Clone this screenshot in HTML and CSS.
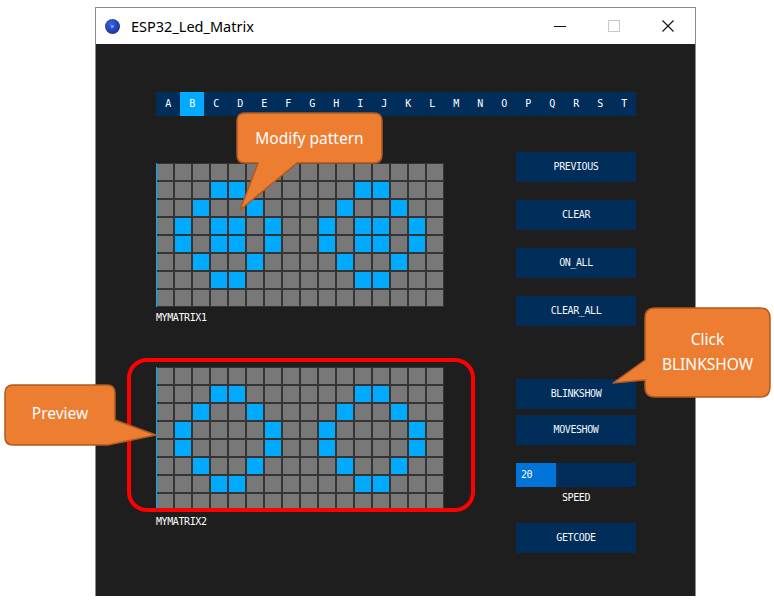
FILE: index.html
```html
<!DOCTYPE html>
<html>
<head>
<meta charset="utf-8">
<title>ESP32_Led_Matrix</title>
<link rel="stylesheet" href="styles.css">
</head>
<body>
<div class="window">
  <div class="titlebar">
    <svg class="app-icon" width="15" height="15" viewBox="0 0 15 15">
      <defs><radialGradient id="g" cx="40%" cy="35%" r="70%"><stop offset="0" stop-color="#3a63e0"/><stop offset="1" stop-color="#1a2f9c"/></radialGradient></defs>
      <circle cx="7.5" cy="7.5" r="7.5" fill="url(#g)"/>
      <path d="M6.3 5.6 L9.2 7.5 L6.3 9.4 Z" fill="#7fb6ff"/>
    </svg>
    <span class="title">ESP32_Led_Matrix</span>
    <div class="controls">
      <span class="ctl"><svg width="12" height="12" viewBox="0 0 12 12"><path d="M0 6.5 H12" stroke="#111" stroke-width="1"/></svg></span>
      <span class="ctl"><svg width="12" height="12" viewBox="0 0 12 12"><rect x="0.5" y="0.5" width="11" height="11" fill="none" stroke="#c8c8c8" stroke-width="1"/></svg></span>
      <span class="ctl"><svg width="12" height="12" viewBox="0 0 12 12"><path d="M0.5 0.5 L11.5 11.5 M11.5 0.5 L0.5 11.5" stroke="#111" stroke-width="1.1"/></svg></span>
    </div>
  </div>
  <div class="content">
    <div class="letters">
      <span>A</span><span class="active">B</span><span>C</span><span>D</span><span>E</span><span>F</span><span>G</span><span>H</span><span>I</span><span>J</span><span>K</span><span>L</span><span>M</span><span>N</span><span>O</span><span>P</span><span>Q</span><span>R</span><span>S</span><span>T</span>
    </div>
    <div class="main">
      <div class="left">
        <div class="matrix">
<i class="cell"></i><i class="cell"></i><i class="cell"></i><i class="cell"></i><i class="cell"></i><i class="cell"></i><i class="cell"></i><i class="cell"></i><i class="cell"></i><i class="cell"></i><i class="cell"></i><i class="cell"></i><i class="cell"></i><i class="cell"></i><i class="cell"></i><i class="cell"></i>
<i class="cell"></i><i class="cell"></i><i class="cell"></i><i class="cell on"></i><i class="cell on"></i><i class="cell"></i><i class="cell"></i><i class="cell"></i><i class="cell"></i><i class="cell"></i><i class="cell"></i><i class="cell on"></i><i class="cell on"></i><i class="cell"></i><i class="cell"></i><i class="cell"></i>
<i class="cell"></i><i class="cell"></i><i class="cell on"></i><i class="cell"></i><i class="cell"></i><i class="cell on"></i><i class="cell"></i><i class="cell"></i><i class="cell"></i><i class="cell"></i><i class="cell on"></i><i class="cell"></i><i class="cell"></i><i class="cell on"></i><i class="cell"></i><i class="cell"></i>
<i class="cell"></i><i class="cell on"></i><i class="cell"></i><i class="cell on"></i><i class="cell on"></i><i class="cell"></i><i class="cell on"></i><i class="cell"></i><i class="cell"></i><i class="cell on"></i><i class="cell"></i><i class="cell on"></i><i class="cell on"></i><i class="cell"></i><i class="cell on"></i><i class="cell"></i>
<i class="cell"></i><i class="cell on"></i><i class="cell"></i><i class="cell on"></i><i class="cell on"></i><i class="cell"></i><i class="cell on"></i><i class="cell"></i><i class="cell"></i><i class="cell on"></i><i class="cell"></i><i class="cell on"></i><i class="cell on"></i><i class="cell"></i><i class="cell on"></i><i class="cell"></i>
<i class="cell"></i><i class="cell"></i><i class="cell on"></i><i class="cell"></i><i class="cell"></i><i class="cell on"></i><i class="cell"></i><i class="cell"></i><i class="cell"></i><i class="cell"></i><i class="cell on"></i><i class="cell"></i><i class="cell"></i><i class="cell on"></i><i class="cell"></i><i class="cell"></i>
<i class="cell"></i><i class="cell"></i><i class="cell"></i><i class="cell on"></i><i class="cell on"></i><i class="cell"></i><i class="cell"></i><i class="cell"></i><i class="cell"></i><i class="cell"></i><i class="cell"></i><i class="cell on"></i><i class="cell on"></i><i class="cell"></i><i class="cell"></i><i class="cell"></i>
<i class="cell"></i><i class="cell"></i><i class="cell"></i><i class="cell"></i><i class="cell"></i><i class="cell"></i><i class="cell"></i><i class="cell"></i><i class="cell"></i><i class="cell"></i><i class="cell"></i><i class="cell"></i><i class="cell"></i><i class="cell"></i><i class="cell"></i><i class="cell"></i>
        </div>
        <div class="label">MYMATRIX1</div>
        <div class="matrix second">
<i class="cell"></i><i class="cell"></i><i class="cell"></i><i class="cell"></i><i class="cell"></i><i class="cell"></i><i class="cell"></i><i class="cell"></i><i class="cell"></i><i class="cell"></i><i class="cell"></i><i class="cell"></i><i class="cell"></i><i class="cell"></i><i class="cell"></i><i class="cell"></i>
<i class="cell"></i><i class="cell"></i><i class="cell"></i><i class="cell on"></i><i class="cell on"></i><i class="cell"></i><i class="cell"></i><i class="cell"></i><i class="cell"></i><i class="cell"></i><i class="cell"></i><i class="cell on"></i><i class="cell on"></i><i class="cell"></i><i class="cell"></i><i class="cell"></i>
<i class="cell"></i><i class="cell"></i><i class="cell on"></i><i class="cell"></i><i class="cell"></i><i class="cell on"></i><i class="cell"></i><i class="cell"></i><i class="cell"></i><i class="cell"></i><i class="cell on"></i><i class="cell"></i><i class="cell"></i><i class="cell on"></i><i class="cell"></i><i class="cell"></i>
<i class="cell"></i><i class="cell on"></i><i class="cell"></i><i class="cell"></i><i class="cell"></i><i class="cell"></i><i class="cell on"></i><i class="cell"></i><i class="cell"></i><i class="cell on"></i><i class="cell"></i><i class="cell"></i><i class="cell"></i><i class="cell"></i><i class="cell on"></i><i class="cell"></i>
<i class="cell"></i><i class="cell on"></i><i class="cell"></i><i class="cell"></i><i class="cell"></i><i class="cell"></i><i class="cell on"></i><i class="cell"></i><i class="cell"></i><i class="cell on"></i><i class="cell"></i><i class="cell"></i><i class="cell"></i><i class="cell"></i><i class="cell on"></i><i class="cell"></i>
<i class="cell"></i><i class="cell"></i><i class="cell on"></i><i class="cell"></i><i class="cell"></i><i class="cell on"></i><i class="cell"></i><i class="cell"></i><i class="cell"></i><i class="cell"></i><i class="cell on"></i><i class="cell"></i><i class="cell"></i><i class="cell on"></i><i class="cell"></i><i class="cell"></i>
<i class="cell"></i><i class="cell"></i><i class="cell"></i><i class="cell on"></i><i class="cell on"></i><i class="cell"></i><i class="cell"></i><i class="cell"></i><i class="cell"></i><i class="cell"></i><i class="cell"></i><i class="cell on"></i><i class="cell on"></i><i class="cell"></i><i class="cell"></i><i class="cell"></i>
<i class="cell"></i><i class="cell"></i><i class="cell"></i><i class="cell"></i><i class="cell"></i><i class="cell"></i><i class="cell"></i><i class="cell"></i><i class="cell"></i><i class="cell"></i><i class="cell"></i><i class="cell"></i><i class="cell"></i><i class="cell"></i><i class="cell"></i><i class="cell"></i>
        </div>
        <div class="label">MYMATRIX2</div>
      </div>
      <div class="right">
        <div class="btn">PREVIOUS</div>
        <div class="btn gap18">CLEAR</div>
        <div class="btn gap18">ON_ALL</div>
        <div class="btn gap18">CLEAR_ALL</div>
        <div class="btn blink">BLINKSHOW</div>
        <div class="btn gap6">MOVESHOW</div>
        <div class="slider"><div class="fill" style="width:40px"></div><span class="val">20</span></div>
        <div class="slider-label">SPEED</div>
        <div class="btn getcode">GETCODE</div>
      </div>
    </div>
  </div>
</div>

<div class="annotations">
  <svg class="shapes" width="774" height="600" viewBox="0 0 774 600">
    <rect x="129" y="360" width="344" height="150" rx="18" ry="18" fill="none" stroke="#ff0000" stroke-width="4"/>
    <path d="M245,113 H374 Q382,113 382,121 V155 Q382,163 374,163 H297 L240,210 L258,163 H245 Q237,163 237,155 V121 Q237,113 245,113 Z" class="bubble"/>
    <path d="M13,385 H107 Q115,385 115,393 V420 L156,435 L108,445 H13 Q5,445 5,437 V393 Q5,385 13,385 Z" class="bubble"/>
    <path d="M655,308 H760 Q770,308 770,318 V387 Q770,397 760,397 H655 Q645,397 645,387 V380 L613,383 L645,360 V318 Q645,308 655,308 Z" class="bubble"/>
  </svg>
  <div class="note note-modify">Modify pattern</div>
  <div class="note note-preview">Preview</div>
  <div class="note note-click">Click<br>BLINKSHOW</div>
</div>
</body>
</html>
```

FILE: styles.css
```css
* { box-sizing: border-box; }
html, body { margin: 0; padding: 0; }
body {
  width: 774px;
  height: 600px;
  background: #ffffff;
  position: relative;
  overflow: hidden;
  font-family: "DejaVu Sans Mono", "Liberation Mono", monospace;
}

.window {
  margin: 7px 0 0 95px;
  width: 601px;
  height: 589px;
  border: 1px solid #8c8c8c;
  border-bottom: none;
  display: flex;
  flex-direction: column;
  background: #1e1e1e;
}

.titlebar {
  height: 36px;
  background: #ffffff;
  display: flex;
  align-items: center;
  padding-left: 9px;
  flex: none;
}
.app-icon { flex: none; }
.title {
  margin-left: 11px;
  font-family: "Noto Sans", "Noto Sans CJK SC", sans-serif;
  font-size: 14.5px;
  color: #000;
  margin-top: -1px;
}
.controls {
  margin-left: auto;
  display: flex;
  height: 100%;
}
.ctl {
  width: 54px;
  height: 100%;
  display: flex;
  align-items: center;
  justify-content: center;
}

.content {
  flex: 1;
  background: #1e1e1e;
  padding: 48px 59px 0 60px;
  color: #ffffff;
  font-size: 10px;
  letter-spacing: -0.4px;
}

.letters {
  display: flex;
  width: 480px;
  height: 24px;
  background: #002d5a;
}
.letters span {
  width: 24px;
  height: 24px;
  display: flex;
  align-items: center;
  justify-content: center;
  line-height: 10px;
}
.letters span.active { background: #00aaff; }

.main {
  display: flex;
  justify-content: space-between;
  align-items: flex-start;
  margin-top: 36px;
}

.left { padding-top: 11px; }

.matrix {
  display: grid;
  grid-template-columns: repeat(16, 16px);
  grid-auto-rows: 16px;
  gap: 2px;
  padding: 1px 1px 1px 0;
  border-left: 1px solid #00aaff;
  background: #343434;
  width: 288px;
}
.matrix.second { margin-top: 44px; }
.cell {
  display: block;
  background: #787878;
}
.cell.on { background: #00aaff; }

.label {
  margin-top: 6px;
  height: 10px;
  line-height: 10px;
  color: #ffffff;
}

.right {
  width: 120px;
  display: flex;
  flex-direction: column;
}
.btn {
  height: 30px;
  background: #002d5a;
  display: flex;
  align-items: center;
  justify-content: center;
  line-height: 10px;
  color: #f2f6fa;
}
.btn.gap18 { margin-top: 18px; }
.btn.blink { margin-top: 53px; }
.btn.gap6 { margin-top: 6px; }
.btn.getcode { margin-top: 20px; }

.slider {
  margin-top: 18px;
  height: 24px;
  background: #002d5a;
  position: relative;
  display: flex;
  align-items: center;
}
.slider .fill {
  position: absolute;
  left: 0;
  top: 0;
  bottom: 0;
  background: #0074d9;
}
.slider .val {
  position: relative;
  margin-left: 5px;
  line-height: 10px;
}
.slider-label {
  margin-top: 6px;
  height: 10px;
  line-height: 10px;
  text-align: center;
}

.annotations {
  position: absolute;
  left: 0;
  top: 0;
  width: 774px;
  height: 600px;
  pointer-events: none;
}
.shapes { position: absolute; left: 0; top: 0; }
.bubble {
  fill: #ed7d31;
  stroke: #ae5a21;
  stroke-width: 1.5;
  stroke-linejoin: round;
}
.note {
  position: absolute;
  color: #ffffff;
  font-family: "Noto Sans", "Open Sans", sans-serif;
  font-size: 15.5px;
  text-align: center;
  line-height: 25px;
}
.note-modify { left: 237px; top: 126px; width: 145px; }
.note-preview { left: 5px; top: 401px; width: 110px; }
.note-click { left: 645px; top: 327px; width: 125px; }
```
